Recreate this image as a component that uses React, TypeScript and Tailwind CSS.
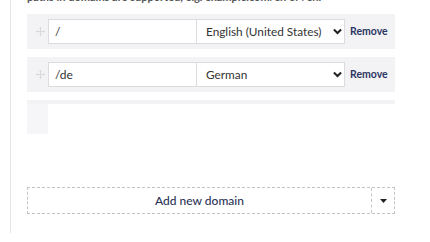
import React from "react";

type Domain = { path: string; language: string };

const domains: Domain[] = [
  { path: "/", language: "English (United States)" },
  { path: "/de", language: "German" },
];

const MoveIcon = () => (
  <svg width="9" height="9" viewBox="0 0 10 10" className="text-[#d6d6d9]">
    <path
      d="M5 0.5 L5 9.5 M0.5 5 L9.5 5 M3.8 1.7 L5 0.5 L6.2 1.7 M3.8 8.3 L5 9.5 L6.2 8.3 M1.7 3.8 L0.5 5 L1.7 6.2 M8.3 3.8 L9.5 5 L8.3 6.2"
      stroke="currentColor"
      strokeWidth="1"
      fill="none"
    />
  </svg>
);

const Chevron = () => (
  <svg width="9" height="7" viewBox="0 0 10 7">
    <path d="M1 1.2 L5 5.2 L9 1.2" stroke="#222" strokeWidth="2.2" fill="none" />
  </svg>
);

const DomainRow = ({ domain }: { domain: Domain }) => (
  <div className="flex items-center h-[35px] bg-[#f3f3f5] pl-[6px]">
    <div className="w-[15px] flex justify-center">
      <MoveIcon />
    </div>
    <div className="w-[149px] h-[25px] bg-white border border-[#dcdcdf] flex items-center px-[6px] text-[12px] text-[#333]">
      {domain.path}
    </div>
    <div className="w-[148px] h-[25px] bg-white border border-l-0 border-[#dcdcdf] flex items-center justify-between pl-[9px] pr-[2px] text-[11.8px] text-[#333]">
      <span>{domain.language}</span>
      <Chevron />
    </div>
    <span className="ml-[5px] text-[10.5px] font-bold text-[#2c3563]">Remove</span>
  </div>
);

export default function App() {
  return (
    <div className="w-[430px] h-[242px] bg-white overflow-hidden font-['Lato','Liberation_Sans',sans-serif]">
      <div className="ml-[10px] h-full border-l border-[#e4e4e6] pl-[16px] pr-[35px]">
        <p className="-mt-[9px] h-[12px] text-[11px] font-bold text-[#555] leading-[12px] whitespace-nowrap">
          paths in domains are supported, e.g. example.com/en or /en.
        </p>
        <div className="mt-[11px] flex flex-col gap-[8px]">
          {domains.map((d) => (
            <DomainRow key={d.path} domain={d} />
          ))}
          {/* third row, covered */}
          <div className="h-[78px] flex flex-col">
            <div className="h-[4px] bg-[#f3f3f5]" />
            <div className="flex flex-1">
              <div className="w-[21px] h-[30px] bg-[#f6f6f8]" />
              <div className="flex-1 bg-white" />
            </div>
          </div>
        </div>
        <div className="mt-[9px] h-[27px] flex border border-dashed border-[#c4c4c6]">
          <div className="flex-1 flex items-center justify-center text-[12px] font-medium text-[#2c3557]">
            Add new domain
          </div>
          <div className="w-[23px] border-l border-dashed border-[#c4c4c6] flex items-center justify-center">
            <svg width="7" height="4" viewBox="0 0 7 4">
              <path d="M0 0 L7 0 L3.5 4 Z" fill="#222" />
            </svg>
          </div>
        </div>
      </div>
    </div>
  );
}
